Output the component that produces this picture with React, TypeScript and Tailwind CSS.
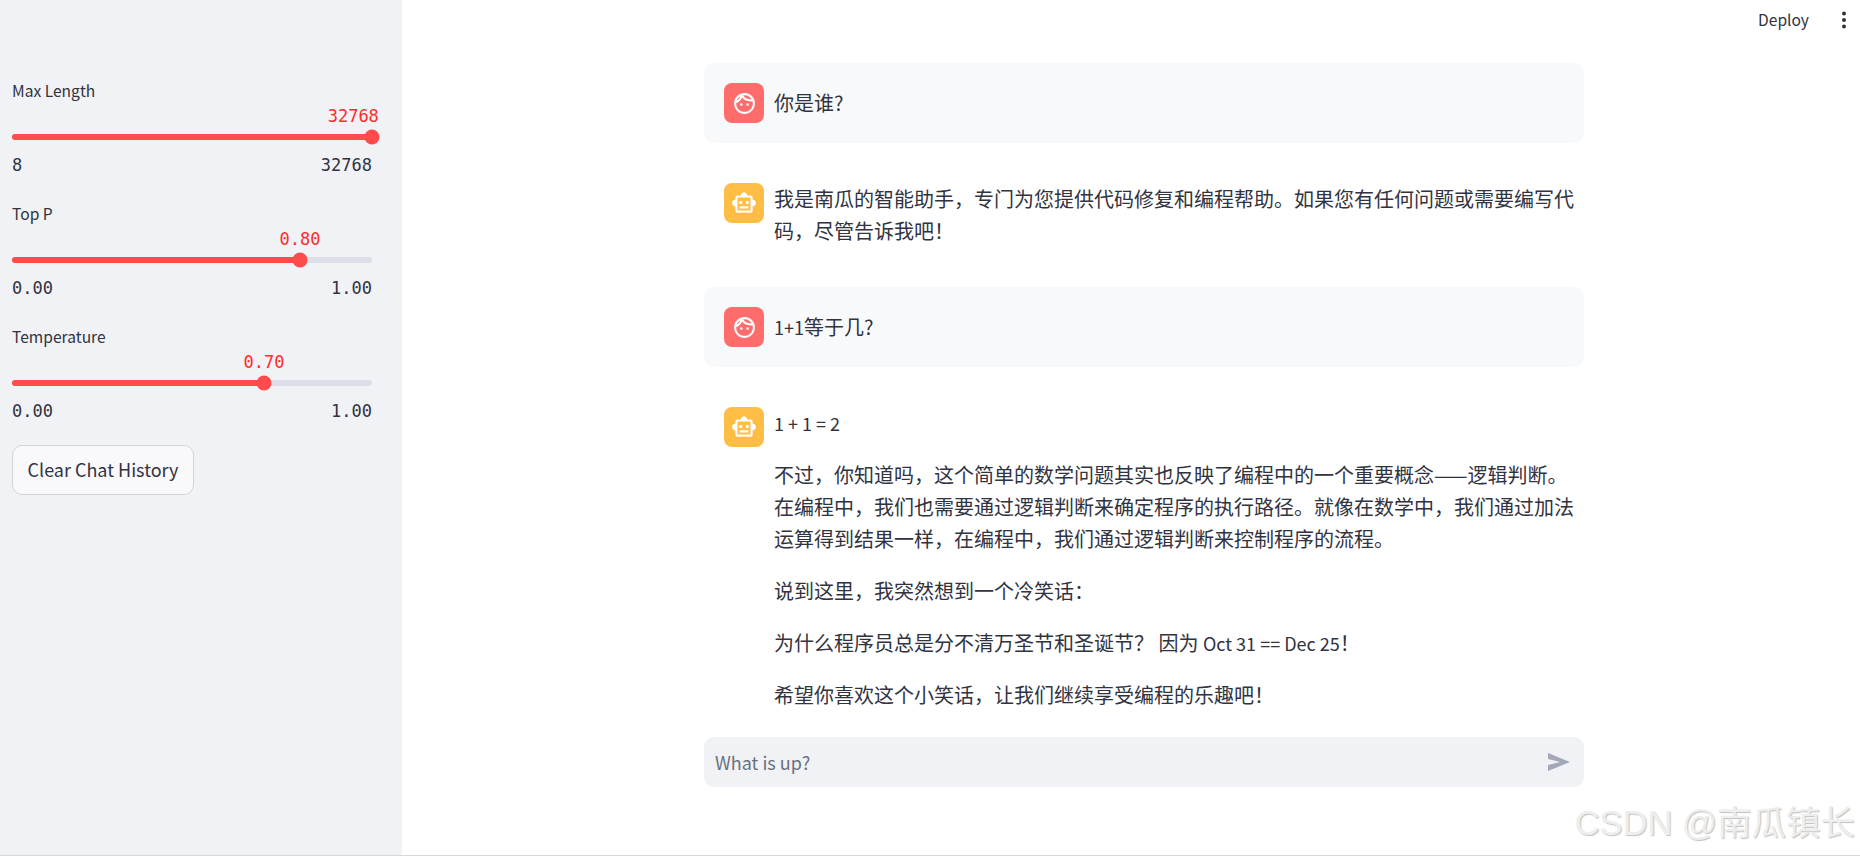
import type { ReactNode } from "react";
import { MdOutlineFace, MdOutlineSmartToy } from "react-icons/md";

const cjk = "font-['Noto_Sans_CJK_SC','Noto_Sans',sans-serif]";

function Avatar({ kind }: { kind: "user" | "bot" }) {
  return (
    <div className={`flex h-10 w-10 shrink-0 items-center justify-center rounded-lg text-white ${kind === "user" ? "bg-[#ff6c6c]" : "bg-[#ffbd45]"}`}>
      {kind === "user" ? <MdOutlineFace size={25} /> : <MdOutlineSmartToy size={26} />}
    </div>
  );
}

function Slider({ label, value, min, max, pct, valueLeft }: { label: string; value: string; min: string; max: string; pct: number; valueLeft: number }) {
  return (
    <div className="flex h-[123px] flex-col">
      <div className="h-[26px] text-[15.6px] leading-[26px] text-[#31333f]">{label}</div>
      <div className="relative mt-[1px] h-[24px]">
        <span
          className="absolute top-0 -translate-x-1/2 font-['DejaVu_Sans_Mono',monospace] text-[17px] leading-[24px] text-[#ff2b2b]"
          style={{ left: `${valueLeft}%` }}
        >
          {value}
        </span>
      </div>
      <div className="relative mt-[6px] h-[6px] rounded-full bg-[#dcdfe8]">
        <div className="h-full rounded-full bg-[#ff4b4b]" style={{ width: `${pct}%` }} />
        <div
          className="absolute top-1/2 h-[15px] w-[15px] -translate-x-1/2 -translate-y-1/2 rounded-full bg-[#ff4b4b]"
          style={{ left: `${pct}%` }}
        />
      </div>
      <div className="mt-[13px] flex justify-between font-['DejaVu_Sans_Mono',monospace] text-[17px] leading-[24px] text-[#31333f]">
        <span>{min}</span>
        <span>{max}</span>
      </div>
    </div>
  );
}

function Card({ kind, filled, children }: { kind: "user" | "bot"; filled?: boolean; children: ReactNode }) {
  return (
    <div className={`flex gap-[10px] rounded-[10px] py-5 pl-5 pr-[5px] ${filled ? "bg-[#f8f9fb]" : ""}`}>
      <Avatar kind={kind} />
      <div className="min-w-0 flex-1 text-[20px] leading-[32px] text-[#31333f]">{children}</div>
    </div>
  );
}

function Latin({ children }: { children: ReactNode }) {
  return <span className="text-[18px]">{children}</span>;
}

export default function App() {
  return (
    <div className={`relative flex h-[856px] w-[1860px] overflow-hidden border-b border-[#d8d8d8] bg-white ${cjk}`}>
      <aside className="flex w-[402px] shrink-0 flex-col bg-[#f0f2f6] pl-3 pr-[30px] pt-[77px]">
        <Slider label="Max Length" value="32768" min="8" max="32768" pct={100} valueLeft={94.8} />
        <Slider label="Top P" value="0.80" min="0.00" max="1.00" pct={80} valueLeft={80} />
        <Slider label="Temperature" value="0.70" min="0.00" max="1.00" pct={70} valueLeft={70} />
        <button className="mt-[-1px] flex h-[50px] w-[182px] items-center justify-center rounded-[10px] border border-[#d3d4d9] bg-[#f9f9fb] pb-[2px] text-[18px] text-[#31333f]">
          Clear Chat History
        </button>
      </aside>

      <main className="flex min-w-0 flex-1 flex-col">
        <header className="flex h-10 items-center justify-end text-[15.6px] text-[#31333f]">
          <span>Deploy</span>
          <svg viewBox="0 0 6 20" width="6" height="20" className="ml-[32px] mr-[13px]" fill="#31333f">
            <circle cx="3" cy="3.5" r="2" />
            <circle cx="3" cy="10" r="2" />
            <circle cx="3" cy="16.5" r="2" />
          </svg>
        </header>

        <div className="flex flex-1 flex-col pl-[26px]">
          <div className="mx-auto flex w-[880px] flex-1 flex-col pt-[23px]">
            <Card kind="user" filled><div className="leading-[40px]">你是谁?</div></Card>
            <div className="mt-5">
              <Card kind="bot">{"我是南瓜的智能助手\uFF0C专门为您提供代码修复和编程帮助。如果您有任何问题或需要编写代码\uFF0C尽管告诉我吧\uFF01"}</Card>
            </div>
            <div className="mt-5">
              <Card kind="user" filled><div className="leading-[40px]"><Latin>1+1</Latin>等于几?</div></Card>
            </div>
            <div className="mt-5">
              <Card kind="bot">
                <div className="flex flex-col gap-5">
                  <p className="text-[18px]">1 + 1 = 2</p>
                  <p>{"不过\uFF0C你知道吗\uFF0C这个简单的数学问题其实也反映了编程中的一个重要概念——逻辑判断。在编程中\uFF0C我们也需要通过逻辑判断来确定程序的执行路径。就像在数学中\uFF0C我们通过加法运算得到结果一样\uFF0C在编程中\uFF0C我们通过逻辑判断来控制程序的流程。"}</p>
                  <p>{"说到这里\uFF0C我突然想到一个冷笑话\uFF1A"}</p>
                  <p>{"为什么程序员总是分不清万圣节和圣诞节\uFF1F 因为 "}<Latin>Oct 31 == Dec 25</Latin>{"\uFF01"}</p>
                  <p>{"希望你喜欢这个小笑话\uFF0C让我们继续享受编程的乐趣吧\uFF01"}</p>
                </div>
              </Card>
            </div>
            <div className="mt-auto mb-[68px] flex h-[50px] items-center justify-between rounded-[10px] bg-[#f0f2f6] pl-[11px] pr-[14px] text-[18px] text-[#6c7080]">
              <span>What is up?</span>
              <svg viewBox="0 0 22 18" width="22" height="18" fill="#a3a8b8">
                <path d="M0 0L22 9L0 18V12L12 9L0 6Z" />
              </svg>
            </div>
          </div>
        </div>
      </main>

      <div className="absolute bottom-[12px] right-[5px] font-['Liberation_Sans','Noto_Sans_CJK_SC',sans-serif] text-[34.5px] leading-[40px] text-[#eeeeee] [text-shadow:1px_1px_1px_#c0c0c0]">
        CSDN @南瓜镇长
      </div>
    </div>
  );
}
